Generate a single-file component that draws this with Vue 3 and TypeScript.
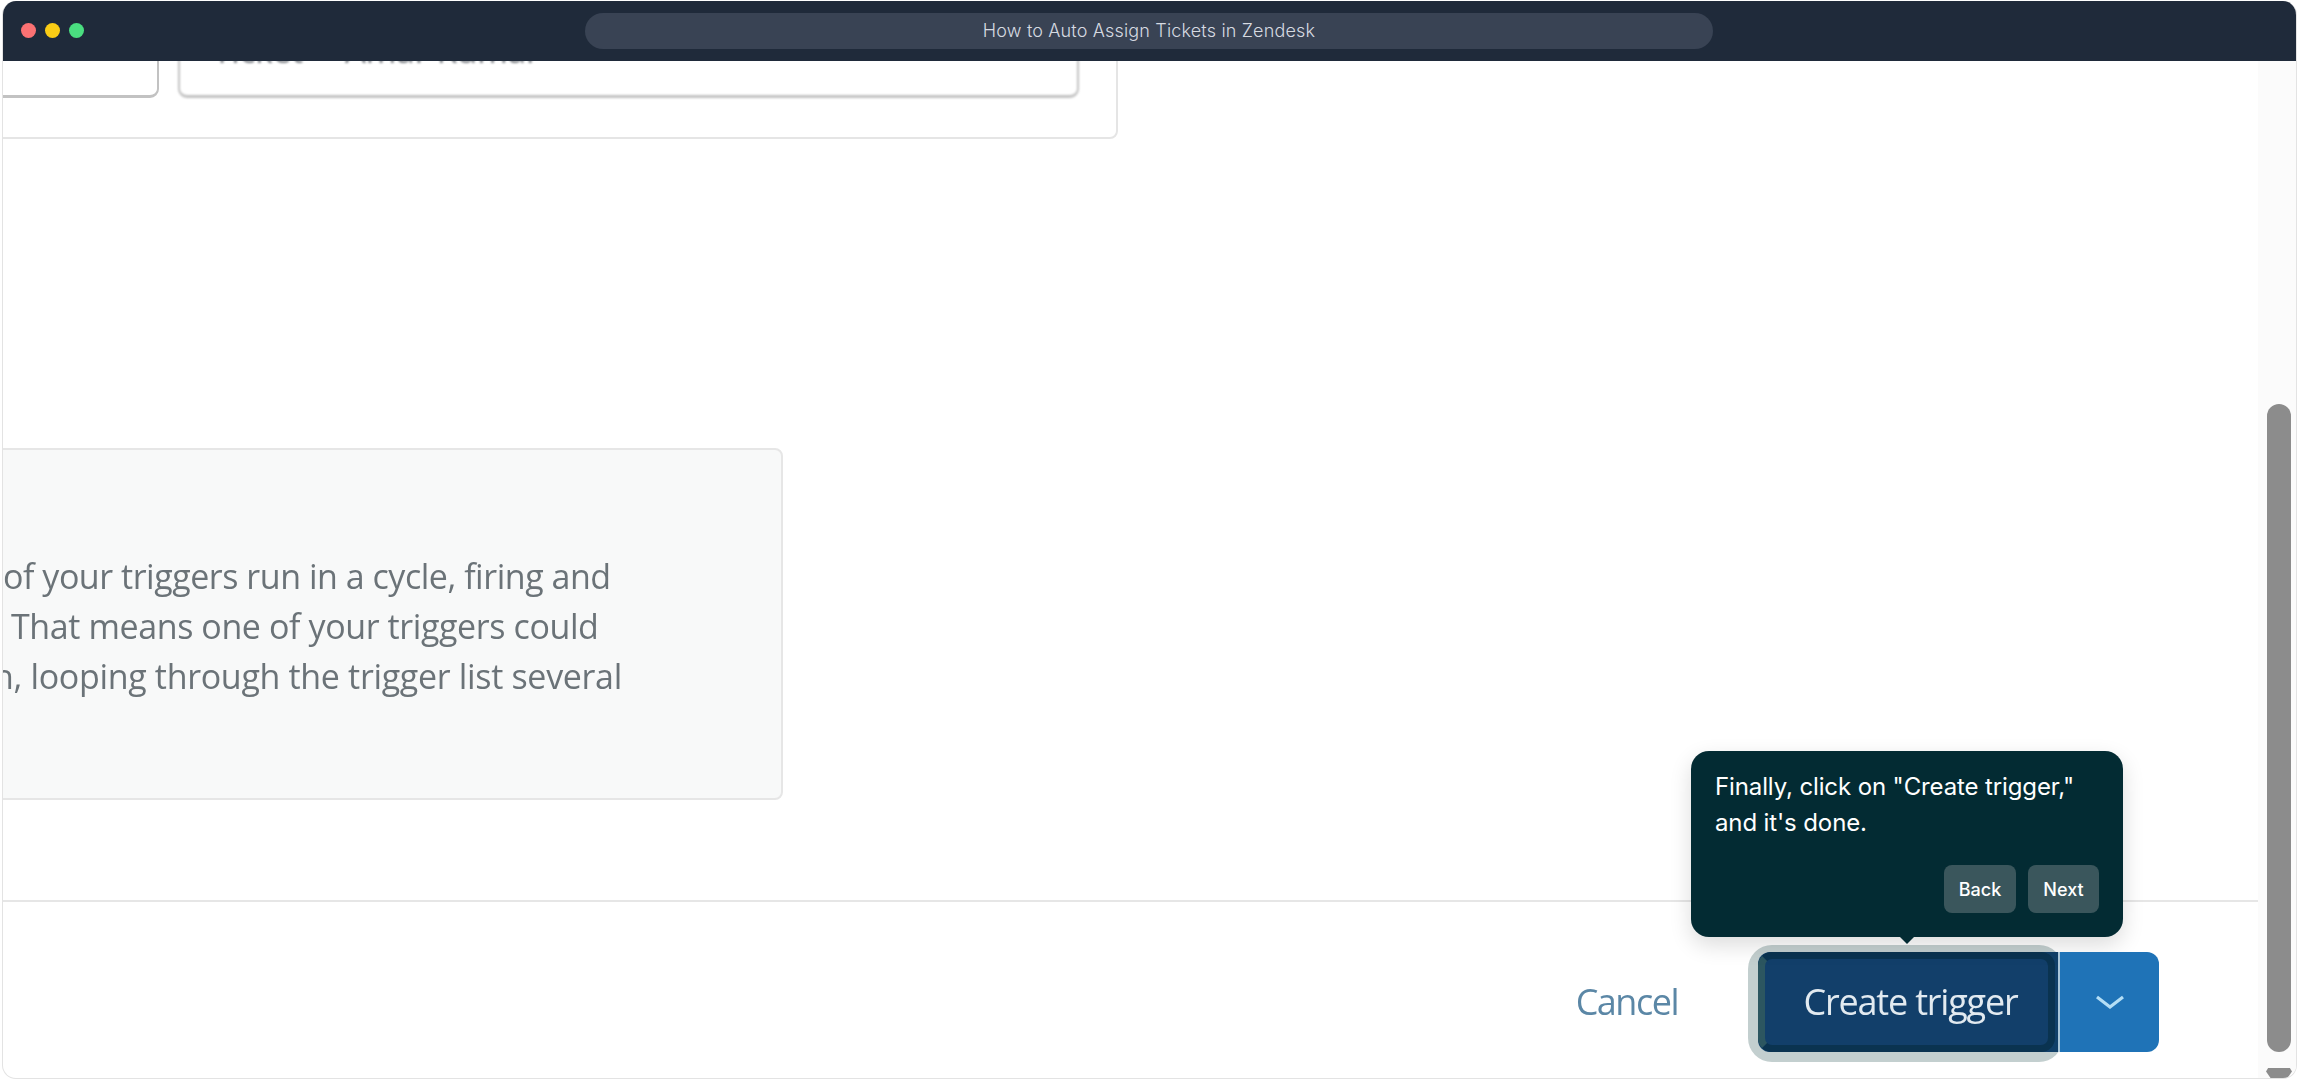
<script setup lang="ts">
const title: string = 'How to Auto Assign Tickets in Zendesk'
const noteLines: { text: string; cls: string }[] = [
  { text: 'of your triggers run in a cycle, firing and', cls: 'l1' },
  { text: 'That means one of your triggers could', cls: 'l2' },
  { text: 'n, looping through the trigger list several', cls: 'l3' },
]
</script>

<template>
  <div class="window">
    <header class="titlebar">
      <div class="dots">
        <span class="dot red"></span>
        <span class="dot yellow"></span>
        <span class="dot green"></span>
      </div>
      <div class="address">{{ title }}</div>
    </header>

    <div class="viewport">
      <main class="page">
        <section class="outer-card">
          <div class="field first"></div>
          <div class="field second">
            <span class="field-a">Ticket</span>
            <span class="field-b">Amar Kumar</span>
          </div>
        </section>

        <section class="note">
          <p v-for="line in noteLines" :key="line.cls" class="note-line" :class="line.cls">{{ line.text }}</p>
        </section>

        <footer class="footer">
          <span class="cancel">Cancel</span>
          <div class="split">
            <div class="main-btn">
              <div class="main-face">
                <div class="main-label">Create trigger</div>
              </div>
              <div class="tour">
                <p class="tour-text">Finally, click on "Create trigger," and it's done.</p>
                <div class="tour-actions">
                  <button class="tour-btn back">Back</button>
                  <button class="tour-btn next">Next</button>
                </div>
              </div>
            </div>
            <div class="menu-btn">
              <svg class="chevron" viewBox="0 0 30 14" width="30" height="14" fill="none">
                <path d="M2 2 L15 12 L28 2" stroke="#b4def5" stroke-width="3.2" />
              </svg>
            </div>
          </div>
        </footer>
      </main>

      <aside class="scrollbar">
        <div class="thumb"></div>
        <div class="arrow"></div>
      </aside>
    </div>
  </div>
</template>

<style>
html, body { margin: 0; background: #ffffff; overflow: hidden; }
</style>

<style scoped>
.window {
  box-sizing: border-box;
  width: 2295px;
  height: 1078px;
  margin: 1px 0 0 2px;
  display: flex;
  flex-direction: column;
  background: #fff;
  border: 1px solid #e3e3e3;
  border-top: none;
  border-radius: 14px;
  overflow: hidden;
  font-family: Inter, "Noto Sans", sans-serif;
}
.titlebar {
  flex: 0 0 60px;
  display: flex;
  align-items: center;
  background: #1f2a3a;
  position: relative;
}
.dots {
  display: flex;
  gap: 9px;
  padding-left: 18px;
  position: absolute;
  left: 0;
  top: 22px;
}
.dot { width: 15px; height: 15px; border-radius: 50%; display: block; }
.red { background: #fb7173; }
.yellow { background: #facc15; }
.green { background: #4ade80; }
.address {
  margin-left: 582px;
  width: 1128px;
  height: 36px;
  border-radius: 18px;
  background: #394354;
  color: #d6dae1;
  font-size: 18px;
  font-weight: 300;
  letter-spacing: 0.16px;
  line-height: 36px;
  text-align: center;
}
.viewport { flex: 1; display: flex; min-height: 0; }
.page {
  flex: 1;
  min-width: 0;
  display: flex;
  flex-direction: column;
  overflow: hidden;
}
.outer-card {
  box-sizing: border-box;
  flex: 0 0 118px;
  width: 1135px;
  margin: -40px 0 0 -20px;
  padding: 0 37px 39px 0;
  display: flex;
  gap: 19px;
  border: 2px solid #e5e5e5;
  border-radius: 8px;
}
.field {
  box-sizing: border-box;
  border: 2px solid #c2c2c2;
  border-bottom-width: 3px;
  border-radius: 9px;
  background: #fff;
}
.first { flex: 0 0 174px; }
.second {
  flex: 1;
  display: flex;
  align-items: flex-end;
  gap: 42px;
  padding: 0 0 27px 33px;
  color: #7d8186;
  font-family: "Open Sans", sans-serif;
  font-size: 33px;
  line-height: 34px;
  letter-spacing: 0;
  filter: blur(0.9px);
}
.note {
  box-sizing: border-box;
  flex: 0 0 352px;
  width: 800px;
  margin: 309px 0 0 -20px;
  padding: 101px 0 0 20px;
  background: #f8f9f9;
  border: 2px solid #e6e6e6;
  border-radius: 8px;
  color: #6b7378;
  font-family: "Open Sans", sans-serif;
  font-size: 34px;
  line-height: 50px;
  letter-spacing: -0.47px;
  overflow: hidden;
}
.note-line { margin: 0; white-space: nowrap; filter: blur(0.45px); }
.l1 { margin-left: -2px; }
.l2 { margin-left: 6px; letter-spacing: -0.4px; }
.l3 { margin-left: -12px; letter-spacing: -0.33px; }
.footer {
  flex: 1;
  margin-top: 100px;
  padding: 50px 99px 0 0;
  border-top: 2px solid #e6e6e6;
  display: flex;
  justify-content: flex-end;
  align-items: flex-start;
}
.cancel {
  margin-right: 80px;
  height: 100px;
  line-height: 100px;
  color: #5b87a6;
  font-family: "Open Sans", sans-serif;
  font-size: 36px;
  letter-spacing: -1.5px;
  filter: blur(0.4px);
}
.split { display: flex; height: 100px; }
.main-btn {
  box-sizing: border-box;
  position: relative;
  width: 300px;
  display: flex;
  z-index: 1;
}
.main-btn::before {
  content: "";
  position: absolute;
  inset: -7px -5px -10px -10px;
  border-radius: 24px;
  background: #c3cfcf;
  z-index: -1;
}
.main-face {
  flex: 1;
  display: flex;
  padding-right: 3px;
  background: #114069;
  border-radius: 12px 0 0 12px;
}
.main-label {
  box-sizing: border-box;
  flex: 1;
  padding-left: 8px;
  border: 7px solid #0a3350;
  border-left-color: #2c5660;
  border-radius: 14px;
  background: #123f6a;
  color: #e2eaf0;
  font-family: "Open Sans", sans-serif;
  font-size: 36px;
  letter-spacing: -1.2px;
  line-height: 86px;
  text-align: center;
  filter: blur(0.3px);
}
.menu-btn {
  box-sizing: border-box;
  width: 101px;
  border-left: 2px solid #a9c6d8;
  background: #1f73b7;
  border-radius: 0 12px 12px 0;
  display: flex;
  align-items: center;
  justify-content: center;
  position: relative;
  z-index: 2;
}
.tour {
  box-sizing: border-box;
  position: absolute;
  left: -67px;
  bottom: calc(100% + 15px);
  width: 432px;
  height: 186px;
  padding: 18px 24px 24px;
  background: #032b33;
  border-radius: 18px;
  box-shadow: 0 8px 22px rgba(0, 0, 0, 0.14);
  color: #fff;
  display: flex;
  flex-direction: column;
  z-index: 3;
}
.tour::after {
  content: "";
  position: absolute;
  left: 209px;
  top: 100%;
  border-left: 7px solid transparent;
  border-right: 7px solid transparent;
  border-top: 7px solid #032b33;
}
.tour-text {
  margin: 0;
  font-size: 24px;
  line-height: 36px;
  letter-spacing: -0.12px;
  flex: 1;
}
.tour-actions { display: flex; justify-content: flex-end; gap: 12px; }
.tour-btn {
  height: 48px;
  border: none;
  border-radius: 8px;
  background: #3a565c;
  color: #fff;
  font-family: Inter, sans-serif;
  font-size: 18px;
  font-weight: 500;
  padding: 0;
}
.back { width: 72px; }
.next { width: 71px; }
.scrollbar {
  flex: 0 0 38px;
  background: #fbfbfb;
  display: flex;
  flex-direction: column;
  align-items: flex-start;
  overflow: hidden;
}
.thumb {
  flex: 0 0 648px;
  width: 24px;
  margin: 343px 0 0 9px;
  border-radius: 12px;
  background: #8c8c8c;
}
.arrow {
  flex: 0 0 14px;
  width: 26px;
  margin: 16px 0 0 8px;
  background: #8c8c8c;
  clip-path: polygon(8% 0, 92% 0, 100% 25%, 72% 100%, 28% 100%, 0 25%);
}
</style>
